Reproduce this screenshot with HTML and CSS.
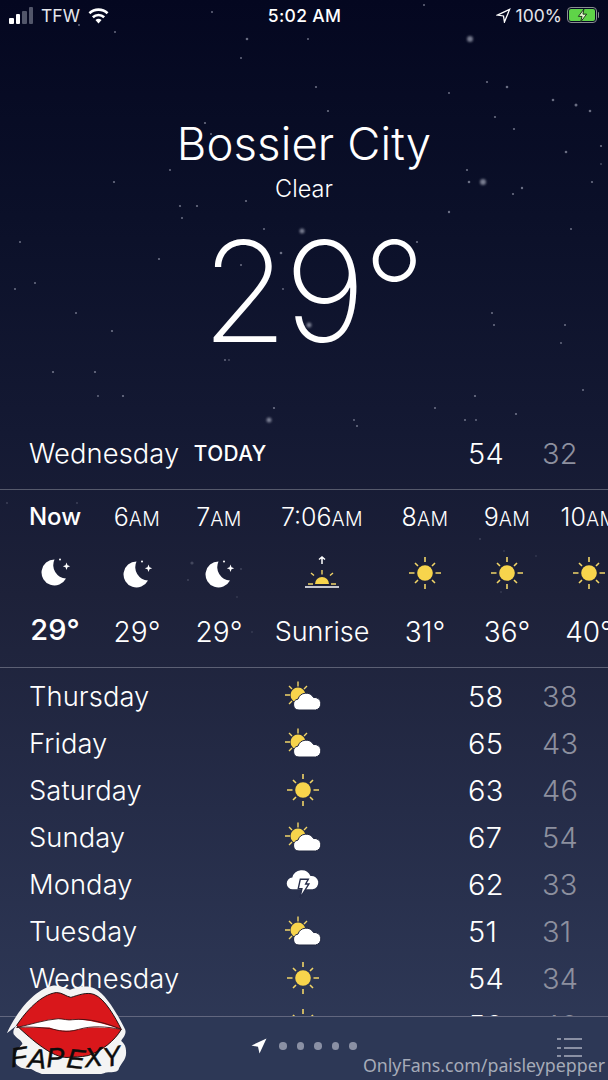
FILE: index.html
```html
<!DOCTYPE html>
<html lang="en">
<head>
<meta charset="utf-8">
<title>Weather</title>
<link rel="stylesheet" href="styles.css">
</head>
<body>
<svg class="defs" width="0" height="0" aria-hidden="true">
  <filter id="soft"><feGaussianBlur stdDeviation="1"/></filter>
  <symbol id="moon" viewBox="0 0 32 32">
    <g transform="translate(2.500 0)">
      <path d="M14 3.500A13 13 0 1 0 25.500 22.600 13.500 13.500 0 0 1 14 3.500Z" transform="translate(-1 1)" fill="#fff"/>
      <path d="M25 7.500l1 2.700 2.700 1-2.700 1-1 2.700-1-2.700-2.700-1 2.700-1Z" fill="#fff"/>
      <circle cx="18.500" cy="4.500" r="1" fill="#fff"/>
    </g>
  </symbol>
  <symbol id="sun" viewBox="0 0 32 32">
    <circle cx="16" cy="16" r="7.800" fill="#f7d44c"/>
    <path d="M16 0v5M16 27v5M0 16h5.500M26.500 16h5.500M6 6l3 3M23 23l3 3M26 6l-3 3M9 23l-3 3" fill="none" stroke="#f0d468" stroke-width="1.600"/>
  </symbol>
  <symbol id="sunrise" viewBox="0 0 36 34">
    <path d="M18 8V1M15 3.500 18 1l3 2.500" fill="none" stroke="#fff" stroke-width="1.500"/>
    <path d="M11 28a7 7 0 0 1 14 0Z" fill="#f7d44c"/>
    <path d="M18 14v4.500M7 17l3 2.500M29 17l-3 2.500M4 28h5M27 28h5" fill="none" stroke="#f0d468" stroke-width="1.400"/>
    <path d="M1 31h34" stroke="#fff" stroke-width="1.500"/>
  </symbol>
  <symbol id="partly" viewBox="0 0 38 32">
    <circle cx="14" cy="15" r="7.500" fill="#f7d44c"/>
    <path d="M14 1.500v5M1 15h5M5 6l3 3M23 6l-3 3M5 24l3-3" fill="none" stroke="#f0d468" stroke-width="1.400"/>
    <path d="M15 30a5.500 5.500 0 0 1-1-10.900A8.500 8.500 0 0 1 29.500 17.500a6.300 6.300 0 0 1 2 12.500Z" fill="#fff" stroke="#20263f" stroke-width="1"/>
  </symbol>
  <symbol id="storm" viewBox="0 0 32 30">
    <path d="M6.500 20a5.500 5.500 0 0 1-.5-11A9 9 0 0 1 23 7.500 6.300 6.300 0 0 1 25 20Z" fill="#fff"/>
    <path d="M13.500 10.500h7.500l-2.500 4.500h3L13 28.500l2-9h-3.500Z" fill="#fff" stroke="#252c49" stroke-width="1.300"/>
  </symbol>
  <symbol id="arrow" viewBox="0 0 16 16">
    <path d="M15.500 .5 .5 7.500l6.500 1.300L8.500 15.500Z"/>
  </symbol>
</svg>

<main class="phone">
  <svg class="stars" viewBox="0 0 608 1080" aria-hidden="true">
    <g fill="#dfe2f2" opacity=".45">
      <circle cx="212" cy="12" r="1"/><circle cx="115" cy="32" r="1"/><circle cx="79" cy="25" r="1"/><circle cx="424" cy="5" r="1"/><circle cx="308" cy="39" r="1"/>
      <circle cx="247" cy="39" r="1.300"/><circle cx="241" cy="58" r="1"/><circle cx="205" cy="123" r="1.100"/><circle cx="211" cy="134" r="1"/><circle cx="170" cy="170" r="1"/>
      <circle cx="114" cy="182" r="1.100"/><circle cx="246" cy="201" r="1.100"/><circle cx="180" cy="206" r="1.100"/><circle cx="197" cy="206" r="1.100"/><circle cx="182" cy="218" r="1"/>
      <circle cx="264" cy="229" r="1"/><circle cx="316" cy="87" r="1.100"/><circle cx="328" cy="111" r="1.100"/><circle cx="449" cy="93" r="1"/><circle cx="487" cy="82" r="1.100"/>
      <circle cx="507" cy="87" r="1.300"/><circle cx="553" cy="100" r="1.300"/><circle cx="576" cy="105" r="1.500"/><circle cx="590" cy="111" r="1.300"/><circle cx="495" cy="117" r="1.100"/>
      <circle cx="514" cy="129" r="1.100"/><circle cx="566" cy="152" r="1.300"/><circle cx="601" cy="146" r="1.100"/><circle cx="601" cy="164" r=".8"/><circle cx="467" cy="170" r="1.100"/>
      <circle cx="469" cy="182" r="1.300"/><circle cx="522" cy="188" r="1.200"/><circle cx="513" cy="194" r="1.100"/><circle cx="592" cy="182" r="1.100"/><circle cx="449" cy="212" r="1.200"/>
      <circle cx="571" cy="229" r="1"/><circle cx="20" cy="242" r="1"/><circle cx="159" cy="259" r="1.100"/><circle cx="35" cy="283" r="1"/><circle cx="15" cy="289" r="1"/>
      <circle cx="281" cy="253" r="1.300"/><circle cx="241" cy="265" r="1"/><circle cx="283" cy="289" r=".9"/><circle cx="76" cy="313" r="1"/><circle cx="112" cy="331" r="1.100"/>
      <circle cx="53" cy="372" r="1.100"/><circle cx="95" cy="372" r="1.100"/><circle cx="98" cy="396" r=".9"/><circle cx="123" cy="396" r="1.100"/><circle cx="225" cy="360" r=".9"/>
      <circle cx="229" cy="360" r=".8"/><circle cx="274" cy="408" r="1.100"/><circle cx="417" cy="242" r="1.100"/><circle cx="492" cy="313" r="1"/><circle cx="494" cy="325" r="1"/>
      <circle cx="565" cy="325" r="1"/><circle cx="561" cy="343" r=".9"/><circle cx="475" cy="396" r="1.100"/><circle cx="583" cy="390" r="1"/><circle cx="435" cy="408" r="1"/>
      <circle cx="516" cy="414" r="1.100"/><circle cx="354" cy="420" r=".9"/><circle cx="357" cy="426" r="1"/><circle cx="465" cy="420" r="1"/><circle cx="476" cy="420" r=".9"/>
    </g>
    <g fill="#dfe2f2" opacity=".2">
      <circle cx="7" cy="503" r=".9"/><circle cx="77" cy="503" r=".9"/><circle cx="188" cy="580" r=".9"/><circle cx="241" cy="569" r=".9"/><circle cx="237" cy="597" r=".8"/>
      <circle cx="252" cy="632" r=".8"/><circle cx="480" cy="539" r=".9"/><circle cx="504" cy="551" r=".8"/><circle cx="536" cy="556" r=".8"/><circle cx="501" cy="592" r=".8"/>
      <circle cx="192" cy="563" r="1.600"/>
    </g>
    <g fill="#d4d8e6" opacity=".55" filter="url(#soft)">
      <circle cx="470" cy="39" r="3"/><circle cx="483" cy="182" r="3"/><circle cx="302" cy="231" r="2.500"/><circle cx="269" cy="420" r="2.500"/><circle cx="309" cy="325" r="2.500"/>
    </g>
  </svg>

  <header class="status">
    <div class="status-left">
      <span class="bars"><i class="on"></i><i class="on"></i><i></i><i></i></span>
      <span>TFW</span>
      <svg class="wifi" viewBox="0 0 20 15" aria-hidden="true">
        <path d="M10 14.500 7.300 11.500a4 4 0 0 1 5.400 0Z" fill="#fff"/>
        <path d="M5 9a7.300 7.300 0 0 1 10 0M2 5.500a11.700 11.700 0 0 1 16 0" fill="none" stroke="#fff" stroke-width="2.300"/>
      </svg>
    </div>
    <div class="status-time">5:02 AM</div>
    <div class="status-right">
      <svg class="loc-small" viewBox="0 0 16 16" aria-hidden="true"><path d="M14.500 1.500 1.500 7.500l6.500 1 1 6.500Z" fill="none" stroke="#fff" stroke-width="1.400"/></svg>
      <span>100%</span>
      <span class="battery"><span class="battery-fill"><svg viewBox="0 0 12 14" aria-hidden="true"><path d="M7.500 0 1.500 8h4L4 14l6.500-8.500h-4Z" fill="#e6f7d0" stroke="#142c14" stroke-width="1"/></svg></span></span>
    </div>
  </header>

  <section class="hero">
    <h1 class="city">Bossier City</h1>
    <p class="condition">Clear</p>
    <p class="temp">29°</p>
  </section>

  <section class="today">
    <span class="day-name">Wednesday</span>
    <span class="today-tag">TODAY</span>
    <span class="hi">54</span>
    <span class="lo">32</span>
  </section>

  <section class="hourly">
    <div class="hour now"><span class="h-label">Now</span><svg class="h-icon"><use href="#moon"/></svg><span class="h-temp">29°</span></div>
    <div class="hour"><span class="h-label">6<small>AM</small></span><svg class="h-icon"><use href="#moon"/></svg><span class="h-temp">29°</span></div>
    <div class="hour"><span class="h-label">7<small>AM</small></span><svg class="h-icon"><use href="#moon"/></svg><span class="h-temp">29°</span></div>
    <div class="hour wide"><span class="h-label">7:06<small>AM</small></span><svg class="h-icon"><use href="#sunrise"/></svg><span class="h-temp">Sunrise</span></div>
    <div class="hour"><span class="h-label">8<small>AM</small></span><svg class="h-icon"><use href="#sun"/></svg><span class="h-temp">31°</span></div>
    <div class="hour"><span class="h-label">9<small>AM</small></span><svg class="h-icon"><use href="#sun"/></svg><span class="h-temp">36°</span></div>
    <div class="hour"><span class="h-label">10<small>AM</small></span><svg class="h-icon"><use href="#sun"/></svg><span class="h-temp">40°</span></div>
  </section>

  <section class="daily">
    <div class="row"><span class="day-name">Thursday</span><svg class="d-icon"><use href="#partly"/></svg><span class="hi">58</span><span class="lo">38</span></div>
    <div class="row"><span class="day-name">Friday</span><svg class="d-icon"><use href="#partly"/></svg><span class="hi">65</span><span class="lo">43</span></div>
    <div class="row"><span class="day-name">Saturday</span><svg class="d-icon"><use href="#sun"/></svg><span class="hi">63</span><span class="lo">46</span></div>
    <div class="row"><span class="day-name">Sunday</span><svg class="d-icon"><use href="#partly"/></svg><span class="hi">67</span><span class="lo">54</span></div>
    <div class="row"><span class="day-name">Monday</span><svg class="d-icon"><use href="#storm"/></svg><span class="hi">62</span><span class="lo">33</span></div>
    <div class="row"><span class="day-name">Tuesday</span><svg class="d-icon"><use href="#partly"/></svg><span class="hi">51</span><span class="lo">31</span></div>
    <div class="row"><span class="day-name">Wednesday</span><svg class="d-icon"><use href="#sun"/></svg><span class="hi">54</span><span class="lo">34</span></div>
    <div class="row"><span class="day-name">Thursday</span><svg class="d-icon"><use href="#sun"/></svg><span class="hi">50</span><span class="lo">40</span></div>
  </section>

  <nav class="tabbar">
    <div class="pager">
      <svg class="pager-arrow"><use href="#arrow"/></svg>
      <i></i><i></i><i></i><i></i><i></i>
    </div>
    <div class="list-icon"><i></i><i></i><i></i></div>
  </nav>

  <div class="watermark">OnlyFans.com/paisleypepper</div>

  <svg class="sticker" viewBox="0 0 130 100" role="img" aria-label="FAPEXY">
    <path d="M3 58C10 42 28 14 50 9c6-1 12 2 18 4 8-3 18-5 26-1 12 6 25 30 31 42 2 6-4 10-4 12 3 3 5 5 5 12 0 8-6 11-8 18-4 4-10 1-14 3-8 3-18 1-24 3-8 1-14-1-22 1-8 1-22-3-30-8-4 0-12 0-16-6-3-7 2-15 7-20 0-3-5-5-9-10-1-3 0-6 3-9Z" fill="#f4f4f4"/>
    <path d="M13 50C22 36 38 18 54 16c6 0 10 4 15 5 7-2 16-6 24-3 11 4 22 24 28 36-7 12-20 22-34 27-9 2-14 1-22 2-15 0-35-17-52-33Z" fill="#d9171b" stroke="#1a1010" stroke-width="1"/>
    <path d="M13 52c14-3 28-8 42-9 6 0 10 2 15 1 12-1 30 3 51 10-16-2-30-3-44 0-10 2-22 2-30-2-10 0-22 0-34 0Z" fill="#fff"/>
    <path d="M13 52C28 49 42 44 56 43c5 0 10 2 15 1 16-2 36 4 50 10-16-3-30-4-44 0-14 4-20 1-30-1-10-1-22-2-34-1Z" fill="none" stroke="#3a0d0f" stroke-width=".9"/>
    <text class="sticker-text" x="8" y="93" rotate="-8 5 -3 6 -5 -10">FAPEXY</text>
  </svg>
</main>
</body>
</html>
```

FILE: styles.css
```css
* { box-sizing: border-box; }
html, body { margin: 0; padding: 0; }
body {
  width: 608px;
  height: 1080px;
  overflow: hidden;
  background: #060a20;
  font-family: Inter, "Liberation Sans", sans-serif;
  color: #fff;
}
.defs { position: absolute; }
.phone {
  position: relative;
  width: 608px;
  height: 1080px;
  overflow: hidden;
  display: flex;
  flex-direction: column;
  background: linear-gradient(180deg, #040720 0%, #0b1029 20%, #141933 40%, #1d2139 55%, #252c48 75%, #2e3856 95%);
}
.stars { position: absolute; inset: 0; width: 608px; height: 1080px; pointer-events: none; }

.status {
  position: relative;
  height: 31px;
  flex: none;
  display: grid;
  grid-template-columns: 1fr auto 1fr;
  align-items: center;
  padding: 0 8px 1px 9px;
  font-size: 17.500px;
  font-weight: 400;
}
.status-left { display: flex; align-items: center; gap: 8px; color: #e4e6ec; }
.bars { display: flex; align-items: flex-end; gap: 2px; height: 17px; }
.bars i { width: 4.500px; background: #52566a; border-radius: 1px; }
.bars i:nth-child(1) { height: 6px; }
.bars i:nth-child(2) { height: 10px; }
.bars i:nth-child(3) { height: 13px; }
.bars i:nth-child(4) { height: 17px; }
.bars i.on { background: #fff; }
.wifi { width: 23px; height: 17px; margin-left: -1px; }
.status-time { font-weight: 500; letter-spacing: .3px; }
.status-right { display: flex; align-items: center; justify-content: flex-end; gap: 5px; color: #e4e6ec; }
.loc-small { width: 15px; height: 15px; }
.battery {
  width: 30px; height: 16px; margin-right: 3px;
  border: 1px solid #8a8e90; border-radius: 4px; padding: 1px;
  display: flex; position: relative;
}
.battery::after {
  content: ""; position: absolute; right: -3px; top: 4px; width: 1.500px; height: 6px;
  background: #8a8e90; border-radius: 0 1px 1px 0;
}
.battery-fill { flex: 1; background: #5fd448; border-radius: 2px; display: flex; justify-content: center; align-items: center; }
.battery-fill svg { width: 11px; height: 13px; }

.hero {
  position: relative;
  flex: none;
  height: 392px;
  display: flex;
  flex-direction: column;
  align-items: center;
  padding-top: 83px;
}
.city { margin: 0; font-size: 45.500px; line-height: 60px; font-weight: 300; letter-spacing: .1px; }
.condition { margin: 1px 0 0; font-size: 23.500px; line-height: 28px; font-weight: 300; }
.temp { margin: 23px 0 0 16px; font-size: 140px; line-height: 130px; font-weight: 200; letter-spacing: -3.500px; }

.today {
  position: relative;
  flex: none;
  height: 67px;
  display: flex;
  align-items: center;
  padding: 0 30px 6px 29px;
  border-bottom: 1px solid #565a6c;
}
.day-name { font-size: 27.300px; font-weight: 300; letter-spacing: .1px; white-space: nowrap; }
.today-tag { margin-left: 14.500px; font-size: 20.800px; font-weight: 500; letter-spacing: .4px; }
.hi, .lo { font-size: 29px; font-weight: 300; width: 36px; text-align: left; flex: none; letter-spacing: .3px; }
.hi { margin-left: auto; margin-right: 38px; }
.lo { color: #8d909f; }

.hourly {
  position: relative;
  flex: none;
  height: 178px;
  display: flex;
  padding-left: 14px;
  border-bottom: 1px solid #5c6074;
}
.hour {
  flex: none;
  width: 82px;
  display: flex;
  flex-direction: column;
  align-items: center;
  padding-top: 11px;
}
.hour.wide { width: 124px; }
.h-label { font-size: 25px; line-height: 32px; font-weight: 300; white-space: nowrap; }
.h-label small { font-size: 19.500px; letter-spacing: .4px; }
.h-icon { width: 32px; height: 32px; margin-top: 22px; }
.wide .h-icon { width: 36px; height: 34px; margin-top: 21px; }
.h-temp { margin-top: 25px; font-size: 28px; line-height: 36px; font-weight: 300; white-space: nowrap; }
.wide .h-temp { margin-top: 24px; font-size: 27px; }
.now .h-label { font-weight: 500; font-size: 24px; }
.now .h-temp { font-weight: 500; font-size: 29px; }

.daily {
  position: relative;
  flex: 1;
  min-height: 0;
  overflow: hidden;
  padding-top: 5px;
}
.row {
  height: 47px;
  display: flex;
  align-items: center;
  padding: 0 30px 0 29px;
  position: relative;
}
.d-icon { position: absolute; left: 284px; top: 7px; width: 38px; height: 32px; }

.tabbar {
  position: relative;
  flex: none;
  height: 64px;
  border-top: 1px solid #62677f;
  background: #2d3856;
  display: flex;
  align-items: flex-start;
  justify-content: space-between;
  padding: 21px 26px 0 251px;
}
.pager { display: flex; align-items: center; gap: 10px; }
.pager-arrow { width: 16px; height: 16px; margin-right: 2px; fill: #fff; }
.pager i { width: 7.500px; height: 7.500px; border-radius: 50%; background: #8a90a4; }
.list-icon { display: flex; flex-direction: column; gap: 6.500px; width: 25px; }
.list-icon i {
  height: 2px;
  background: linear-gradient(90deg, #8a90a4 0 4px, transparent 4px 7px, #8a90a4 7px);
}

.watermark {
  position: absolute;
  right: 3px;
  bottom: 3px;
  font-family: "Noto Sans", "Open Sans", sans-serif;
  font-size: 17.800px;
  line-height: 24px;
  color: #a6abb8;
}

.sticker { position: absolute; left: 4px; top: 977px; width: 126px; height: 97px; }
.sticker-text {
  font-family: "Liberation Sans", sans-serif;
  font-style: italic;
  font-size: 28px;
  fill: #0c0c0c;
  stroke: #0c0c0c;
  stroke-width: .5px;
  letter-spacing: 1.200px;
}
```
